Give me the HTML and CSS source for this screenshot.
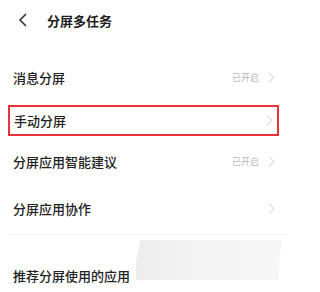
FILE: index.html
```html
<!DOCTYPE html>
<html lang="zh">
<head>
<meta charset="utf-8">
<link rel="stylesheet" href="styles.css">
</head>
<body>
<div class="page">
  <header class="topbar">
    <svg class="back" width="10" height="14" viewBox="0 0 10 14"><polyline points="8,1 2,7 8,13" fill="none" stroke="#333" stroke-width="1.6"/></svg>
    <span class="title">分屏多任务</span>
  </header>
  <div class="list">
    <div class="row">
      <span class="label">消息分屏</span>
      <span class="right"><span class="state">已开启</span><svg class="chev" width="7" height="11" viewBox="0 0 7 11"><polyline points="1,1 6,5.5 1,10" fill="none" stroke="#cccccc" stroke-width="1"/></svg></span>
    </div>
    <div class="row-hl">
      <div class="hl-box">
        <span class="label">手动分屏</span>
        <span class="right"><svg class="chev" width="7" height="11" viewBox="0 0 7 11"><polyline points="1,1 6,5.5 1,10" fill="none" stroke="#cccccc" stroke-width="1"/></svg></span>
      </div>
    </div>
    <div class="row">
      <span class="label">分屏应用智能建议</span>
      <span class="right"><span class="state">已开启</span><svg class="chev" width="7" height="11" viewBox="0 0 7 11"><polyline points="1,1 6,5.5 1,10" fill="none" stroke="#cccccc" stroke-width="1"/></svg></span>
    </div>
    <div class="row row-tall">
      <span class="label">分屏应用协作</span>
      <span class="right"><svg class="chev" width="7" height="11" viewBox="0 0 7 11"><polyline points="1,1 6,5.5 1,10" fill="none" stroke="#cccccc" stroke-width="1"/></svg></span>
    </div>
    <div class="divider"></div>
    <div class="section">
      <span class="label">推荐分屏使用的应用</span>
      <div class="smudge"></div>
    </div>
  </div>
</div>
</body>
</html>
```
FILE: styles.css
```css
html, body {
  margin: 0;
  padding: 0;
  background: #ffffff;
}
body {
  font-family: "Noto Sans CJK SC", "Noto Sans", sans-serif;
  color: #222222;
}
.page {
  width: 290px;
  height: 292px;
  overflow: hidden;
}
.topbar {
  height: 40px;
  display: flex;
  align-items: center;
  padding-left: 18px;
}
.back {
  display: block;
}
.title {
  margin-left: 19px;
  font-size: 13px;
  font-weight: 700;
  color: #1e1e1e;
}
.list {
  padding-top: 16px;
}
.row {
  height: 42px;
  display: flex;
  align-items: center;
  justify-content: space-between;
  padding: 0 15px 0 13px;
}
.row-tall {
  height: 52px;
  padding-top: 0;
}
.label {
  font-size: 13px;
  font-weight: 500;
  color: #222222;
}
.right {
  display: flex;
  align-items: center;
  gap: 9px;
}
.state {
  font-size: 9px;
  color: #b8b8b8;
}
.chev {
  display: block;
}
.row-hl {
  height: 42px;
  box-sizing: border-box;
  padding: 7px 11px 4px 8px;
}
.hl-box {
  height: 31px;
  box-sizing: border-box;
  border: 2px solid #e8323c;
  display: flex;
  align-items: center;
  justify-content: space-between;
  padding: 0 4px 0 4px;
}
.divider {
  height: 1px;
  margin: 0 3px 0 7px;
  background: #f3f3f3;
}
.section {
  position: relative;
  height: 56px;
  display: flex;
  align-items: flex-end;
  padding: 0 0 6px 13px;
  box-sizing: border-box;
}
.section .label {
  position: relative;
  z-index: 0;
}
.smudge {
  position: absolute;
  left: 136px;
  top: 5px;
  width: 146px;
  height: 40px;
  background: linear-gradient(90deg, #ededed 0%, #f4f4f4 40%, #f7f7f7 100%);
  clip-path: polygon(3% 0, 100% 0, 97% 100%, 0 100%, 0 55%);
  z-index: 1;
}
```
